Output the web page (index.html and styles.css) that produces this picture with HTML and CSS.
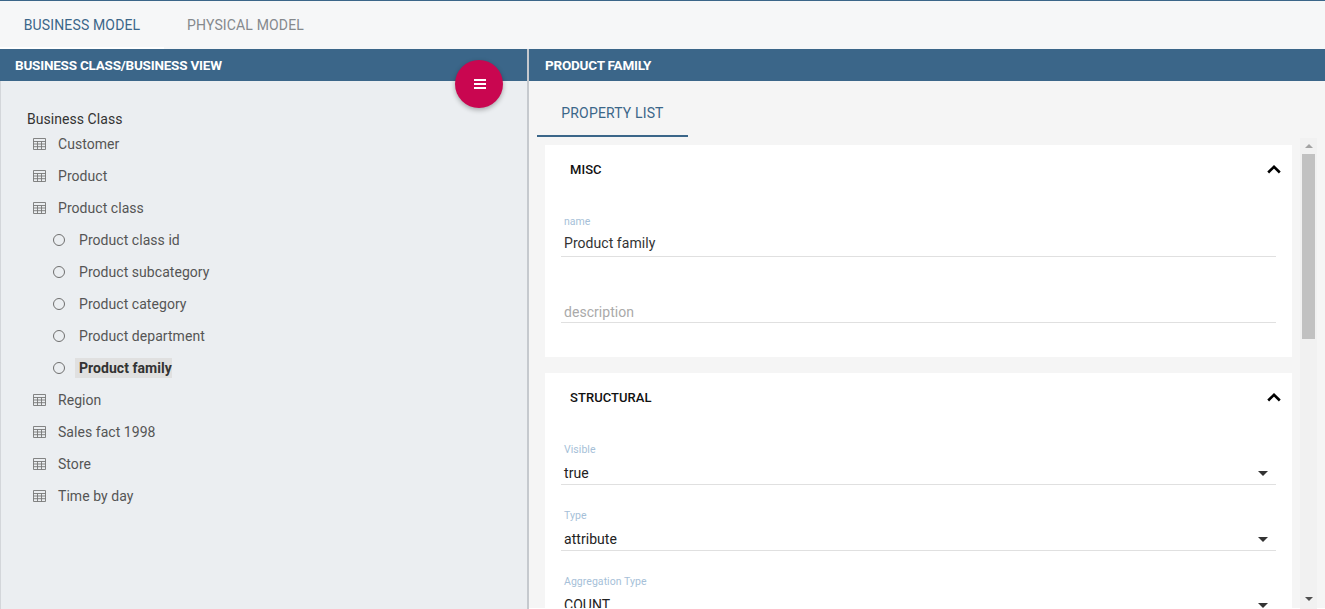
FILE: index.html
```html
<!DOCTYPE html>
<html lang="en">
<head>
    <meta charset="UTF-8">
    <title>Business Model</title>
    <link rel="stylesheet" href="styles.css">
</head>
<body>
    <svg class="icon-defs" width="0" height="0">
        <symbol id="table" viewBox="0 0 13 12">
            <path d="M.5.5h12v11H.5zM.5 3.500h12M.5 6h12M.5 8.700h12M4.500 3.500v8M8.500 3.500v8" fill="none" stroke="currentColor" stroke-width=".9"/>
        </symbol>
    </svg>

    <nav class="top-tabs">
        <a class="top-tab active">BUSINESS MODEL</a>
        <a class="top-tab">PHYSICAL MODEL</a>
    </nav>

    <main class="columns">
        <section class="left-panel">
            <header class="panel-title">BUSINESS CLASS/BUSINESS VIEW</header>
            <button class="fab">
                <svg width="12" height="10" viewBox="0 0 12 10"><path d="M0 0h12v2H0zM0 4h12v2H0zM0 8h12v2H0z" fill="#fff"/></svg>
            </button>
            <div class="tree">
                <div class="tree-root">Business Class</div>
                <div class="tree-row"><svg class="table-icon"><use href="#table"/></svg><span class="tree-label">Customer</span></div>
                <div class="tree-row"><svg class="table-icon"><use href="#table"/></svg><span class="tree-label">Product</span></div>
                <div class="tree-row"><svg class="table-icon"><use href="#table"/></svg><span class="tree-label">Product class</span></div>
                <div class="tree-row child"><i class="ring"></i><span class="tree-label">Product class id</span></div>
                <div class="tree-row child"><i class="ring"></i><span class="tree-label">Product subcategory</span></div>
                <div class="tree-row child"><i class="ring"></i><span class="tree-label">Product category</span></div>
                <div class="tree-row child"><i class="ring"></i><span class="tree-label">Product department</span></div>
                <div class="tree-row child"><i class="ring"></i><span class="tree-label selected">Product family</span></div>
                <div class="tree-row"><svg class="table-icon"><use href="#table"/></svg><span class="tree-label">Region</span></div>
                <div class="tree-row"><svg class="table-icon"><use href="#table"/></svg><span class="tree-label">Sales fact 1998</span></div>
                <div class="tree-row"><svg class="table-icon"><use href="#table"/></svg><span class="tree-label">Store</span></div>
                <div class="tree-row"><svg class="table-icon"><use href="#table"/></svg><span class="tree-label">Time by day</span></div>
            </div>
        </section>

        <section class="right-panel">
            <header class="panel-title">PRODUCT FAMILY</header>
            <div class="sub-tabs">
                <a class="sub-tab">PROPERTY LIST</a>
            </div>
            <div class="property-area">
                <div class="cards">
                    <div class="card misc">
                        <div class="card-head">
                            <span>MISC</span>
                            <svg class="chevron" width="14" height="9" viewBox="0 0 14 9"><path d="M1.200 7.500 7 1.800l5.800 5.700" fill="none" stroke="#000" stroke-width="2.600"/></svg>
                        </div>
                        <div class="field">
                            <label>name</label>
                            <div class="value">Product family</div>
                        </div>
                        <div class="field description">
                            <div class="value placeholder">description</div>
                        </div>
                    </div>
                    <div class="card">
                        <div class="card-head">
                            <span>STRUCTURAL</span>
                            <svg class="chevron" width="14" height="9" viewBox="0 0 14 9"><path d="M1.200 7.500 7 1.800l5.800 5.700" fill="none" stroke="#000" stroke-width="2.600"/></svg>
                        </div>
                        <div class="field select">
                            <label>Visible</label>
                            <div class="value">true<i class="caret"></i></div>
                        </div>
                        <div class="field select">
                            <label>Type</label>
                            <div class="value">attribute<i class="caret"></i></div>
                        </div>
                        <div class="field select">
                            <label>Aggregation Type</label>
                            <div class="value">COUNT<i class="caret"></i></div>
                        </div>
                    </div>
                </div>
                <div class="scrollbar">
                    <i class="arrow up"></i>
                    <div class="thumb"></div>
                    <i class="arrow down"></i>
                </div>
            </div>
        </section>
    </main>
</body>
</html>
```

FILE: styles.css
```css
html, body {
    height: 100%;
    margin: 0;
    overflow: hidden;
}

body {
    display: flex;
    flex-direction: column;
    font-family: Roboto, sans-serif;
    font-size: 14px;
    letter-spacing: 0.05px;
    color: #333;
    background-color: #f6f7f8;
    border-top: 1px solid #3b6689;
    box-sizing: border-box;
}

.icon-defs {
    position: absolute;
}

.top-tabs {
    display: flex;
    height: 48px;
    flex: none;
}

.top-tab {
    width: 163px;
    height: 46px;
    line-height: 48px;
    text-align: center;
    letter-spacing: 0.15px;
    color: #85898d;
}

.top-tab.active {
    width: 164px;
    color: #3b6689;
    border-bottom: 2px solid #fff;
}

.columns {
    display: flex;
    flex: 1;
    min-height: 0;
}

.panel-title {
    height: 32px;
    line-height: 32px;
    flex: none;
    padding-left: 15px;
    color: #fff;
    font-size: 13.500px;
    font-weight: 700;
    letter-spacing: -0.22px;
    background-color: #3b6689;
}

.left-panel {
    position: relative;
    width: 527px;
    flex: none;
    display: flex;
    flex-direction: column;
    border-right: 2px solid #c5c9ce;
}

.fab {
    position: absolute;
    top: 11px;
    right: 24px;
    width: 48px;
    height: 48px;
    padding: 0 0 0 1px;
    border: none;
    border-radius: 50%;
    display: flex;
    align-items: center;
    justify-content: center;
    background-color: #c90650;
    box-shadow: 0 2px 5px rgba(0, 0, 0, 0.3);
}

.tree {
    flex: 1;
    padding: 30px 0 0 26px;
    background-color: #ebeef1;
    border-left: 1px solid #d3d6da;
}

.tree-root {
    height: 17px;
    line-height: 16px;
    color: #333;
}

.tree-row {
    display: flex;
    align-items: center;
    height: 32px;
    padding-left: 6px;
    color: #555;
}

.tree-row.child {
    padding-left: 26px;
}

.table-icon {
    flex: none;
    width: 13px;
    height: 12px;
    margin-right: 9px;
    color: #777;
}

.ring {
    flex: none;
    box-sizing: border-box;
    width: 12px;
    height: 12px;
    margin-right: 11px;
    border: 1.500px solid #6f6f6f;
    border-radius: 50%;
}

.tree-label {
    padding: 0 0 0 3px;
}

.tree-label.selected {
    padding: 0 0 0 4px;
    margin-left: -1px;
    line-height: 20px;
    font-weight: 700;
    color: #333;
    background-color: #e0e0e0;
}

.right-panel {
    flex: 1;
    min-width: 0;
    display: flex;
    flex-direction: column;
    background-color: #f5f5f5;
}

.right-panel .panel-title {
    padding-left: 16px;
}

.sub-tabs {
    height: 56px;
    flex: none;
    padding-left: 8px;
}

.sub-tab {
    display: block;
    width: 151px;
    height: 54px;
    line-height: 64px;
    text-align: center;
    letter-spacing: 0.15px;
    color: #3b6689;
    border-bottom: 2px solid #3b6689;
}

.property-area {
    flex: 1;
    min-height: 0;
    display: flex;
    border-bottom: 1px solid #fff;
}

.cards {
    width: 747px;
    margin: 8px 0 0 16px;
    overflow: hidden;
}

.card {
    background-color: #fff;
    padding: 0 16px;
    margin-bottom: 16px;
}

.card.misc {
    height: 212px;
}

.card-head {
    display: flex;
    align-items: center;
    justify-content: space-between;
    height: 48px;
    padding-left: 9px;
    margin-right: -5px;
    margin-bottom: 14px;
    font-size: 13px;
    font-weight: 500;
    color: #111;
}

.field {
    height: 50px;
    padding-top: 8px;
    margin-bottom: 16px;
    box-sizing: border-box;
    border-bottom: 1px solid #e0e0e0;
}

.field label {
    display: block;
    height: 14px;
    padding-left: 3px;
    font-size: 10.500px;
    line-height: 14px;
    color: #a6bfd8;
}

.field .value {
    position: relative;
    height: 27px;
    line-height: 29px;
    padding-left: 3px;
    color: #333;
}

.field.description {
    padding-top: 25px;
}

.field .placeholder {
    height: 24px;
    color: #aaa;
}

.field.select .value {
    color: #222;
    line-height: 33px;
}

.caret {
    position: absolute;
    right: 8px;
    top: 14px;
    border-style: solid;
    border-width: 5px 5px 0 5px;
    border-color: #333 transparent transparent transparent;
}

.scrollbar {
    width: 17px;
    height: 471px;
    margin-left: 8px;
    display: flex;
    flex-direction: column;
    align-items: center;
    background-color: #f1f1f1;
    margin-top: 1px;
}

.thumb {
    width: 13px;
    height: 185px;
    flex: none;
    background-color: #c1c1c1;
}

.arrow {
    width: 0;
    height: 0;
    border-style: solid;
    border-color: transparent;
}

.arrow.up {
    margin: 6px 0 6px;
    border-width: 0 4px 4px 4px;
    border-bottom-color: #a3a3a3;
}

.arrow.down {
    margin-top: auto;
    margin-bottom: 8px;
    border-width: 4px 4px 0 4px;
    border-top-color: #505050;
}
```
